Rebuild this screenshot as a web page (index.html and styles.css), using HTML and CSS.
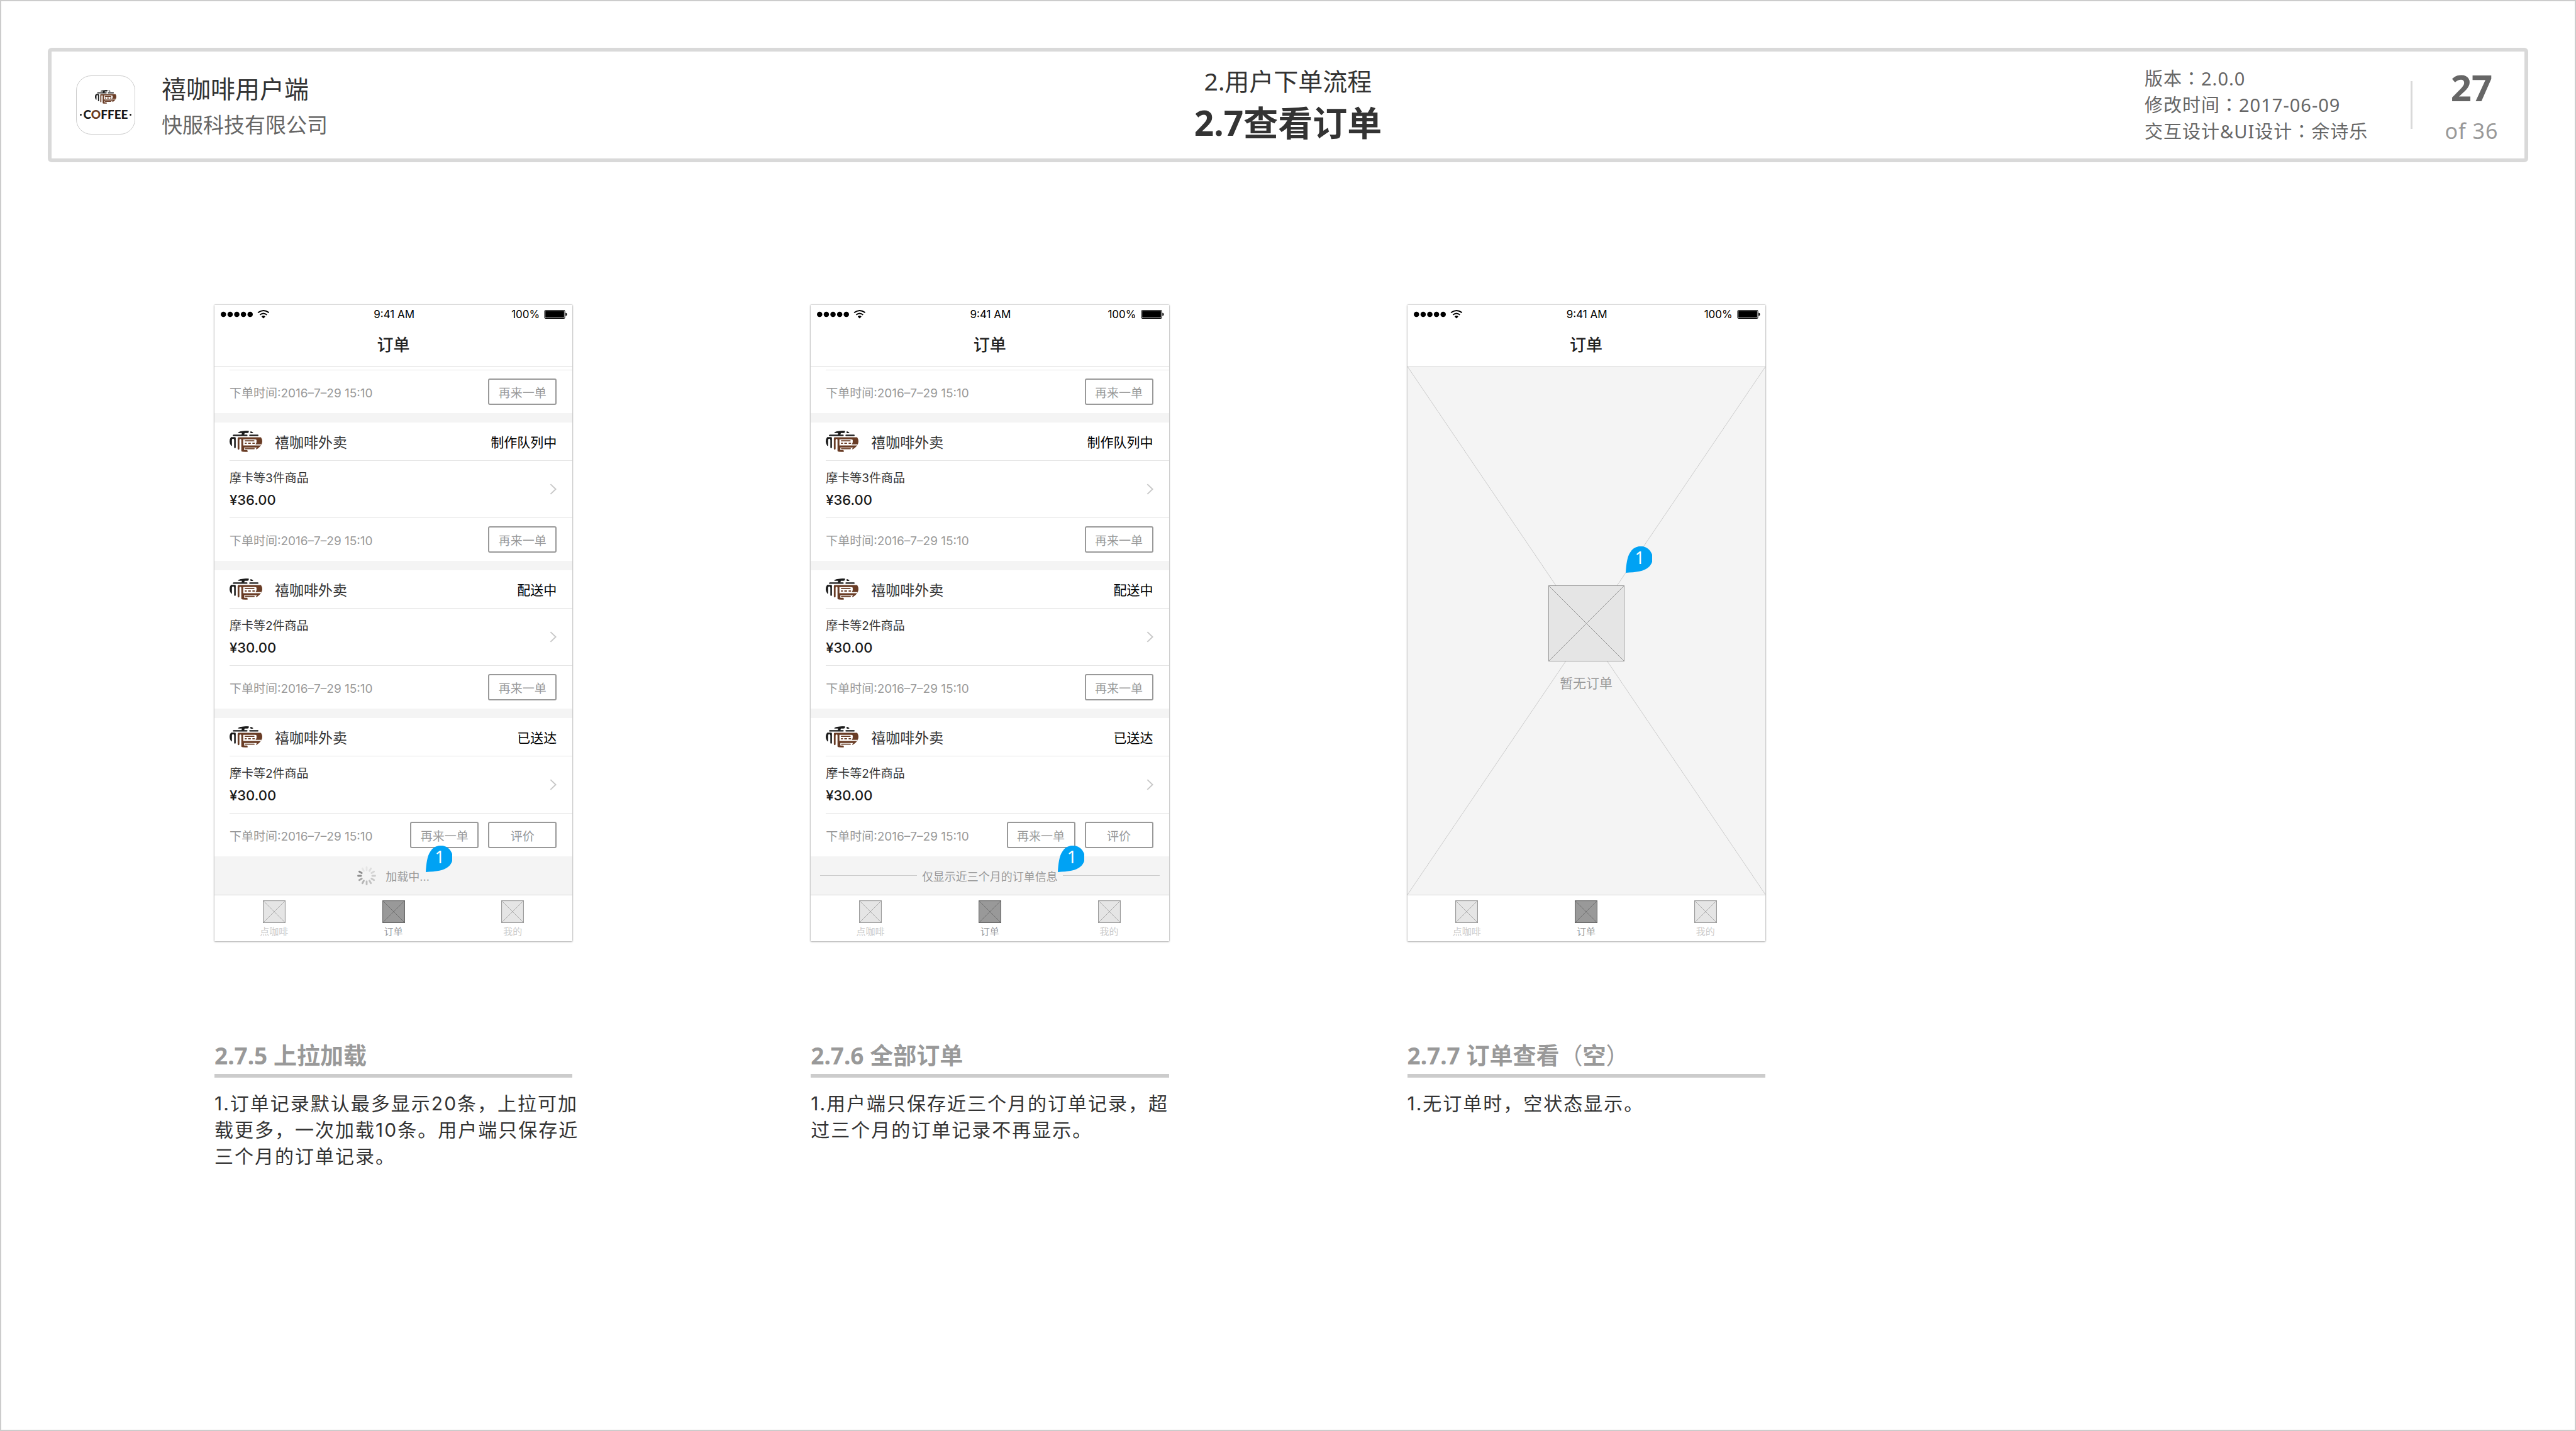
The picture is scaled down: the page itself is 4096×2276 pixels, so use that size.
FILE: index.html
```html
<!DOCTYPE html>
<html lang="zh-CN">
<head>
<meta charset="utf-8">
<meta name="viewport" content="width=device-width, initial-scale=1">
<title>2.7查看订单</title>
<link rel="stylesheet" href="styles.css">
</head>
<body>
<svg class="defs" width="0" height="0" aria-hidden="true">
  <defs>
    <clipPath id="mark-clip"><ellipse cx="115" cy="79" rx="103" ry="68"/></clipPath>
    <symbol id="mark" viewBox="12 11 206 137" preserveAspectRatio="none">
      <g clip-path="url(#mark-clip)">
        <g fill="#1a1a1a">
          <path d="M65 24 Q72 11 133 11 V20 Q132 26 124 26 H107 L104 38 H87 L90 26 H70 Q65 26 65 24Z"/>
          <path d="M143 16 H150 L161 23 Q161 27 155 27 H146 Q141 24 143 16Z"/>
          <rect x="32" y="36" width="93" height="9" rx="4"/>
          <rect x="136" y="36" width="58" height="9" rx="4"/>
          <path d="M10 105 V60 L22 52 H45 Q51 52 51 58 V118 Q51 123 46 123 Q41 123 41 118 V70 Q41 62 34 62 Q27 62 27 70 V106 Q25 112 18 110Z"/>
        </g>
        <path fill="#693c25" d="M63 59 Q63 53 69 53 H218 V134 H200 L180 131 Q176 130 181 123 L186 119 H104 V135 H120 Q126 135 126 142 V148 H96 Q86 148 86 138 V70 Q86 64 80 64 Q74 64 74 70 V127 Q74 133 69 133 Q63 133 63 127Z"/>
        <path fill="#fff" d="M98 66 H172 Q182 66 182 72 V84 Q182 90 176 99 H216 V106 H98Z"/>
        <g fill="#693c25">
          <rect x="107" y="72" width="62" height="8" rx="4"/>
          <rect x="107" y="88" width="14" height="8" rx="4"/>
          <rect x="128" y="88" width="19" height="8" rx="4"/>
          <rect x="155" y="88" width="17" height="8" rx="4"/>
          <rect x="108" y="123" width="62" height="7" rx="3"/>
        </g>
      </g>
    </symbol>
    <symbol id="signal" viewBox="0 0 101 20">
      <circle cx="5.6" cy="10" r="5.6"/><circle cx="19.6" cy="10" r="5.6"/><circle cx="33.5" cy="10" r="5.6"/><circle cx="47.4" cy="10" r="5.6"/><circle cx="61.3" cy="10" r="5.6"/>
      <g fill="none" stroke="#000" stroke-width="2.6">
        <path d="M77.500 6.500 Q89 -2.500 100.500 6.500"/>
        <path d="M81.800 11 Q89 5 96.200 11"/>
      </g>
      <path d="M85 14.500 Q89 10.800 93 14.500 L89 18.500Z"/>
    </symbol>
    <symbol id="battery" viewBox="0 0 49 19">
      <rect x=".7" y=".7" width="43.600" height="17.600" rx="2.500" fill="none" stroke="#000" stroke-width="1.400"/>
      <rect x="2.300" y="2.300" width="40.400" height="14.400" rx="1"/>
      <path d="M46 6 Q49 6.500 49 9.500 Q49 12.500 46 13Z"/>
    </symbol>
    <symbol id="chevron" viewBox="0 0 14 24">
      <path d="M1.500 1.500 L12.500 12 L1.500 22.500" fill="none" stroke="#c7c7c7" stroke-width="2.500"/>
    </symbol>
    <symbol id="box" viewBox="0 0 48 48">
      <rect class="box-fill" x=".75" y=".75" width="46.500" height="46.500"/>
      <path class="box-line" d="M1 1 L47 47 M47 1 L1 47"/>
    </symbol>
    <symbol id="pin" viewBox="0 0 55 55">
      <path fill="#00a2f4" d="M0 55 C1 38 3 22 9 13 A25 25 0 1 1 47 44 C38 52 22 54 0 55Z"/>
    </symbol>
    <symbol id="spinner" viewBox="-20 -20 40 40">
      <g stroke-width="3.800" stroke-linecap="round">
        <path stroke="#e6e6e6" d="M0 -12 V-18"/>
        <path stroke="#dedede" d="M0 -12 V-18" transform="rotate(30)"/>
        <path stroke="#d6d6d6" d="M0 -12 V-18" transform="rotate(60)"/>
        <path stroke="#cecece" d="M0 -12 V-18" transform="rotate(90)"/>
        <path stroke="#c8c8c8" d="M0 -12 V-18" transform="rotate(120)"/>
        <path stroke="#c2c2c2" d="M0 -12 V-18" transform="rotate(150)"/>
        <path stroke="#bcbcbc" d="M0 -12 V-18" transform="rotate(180)"/>
        <path stroke="#b4b4b4" d="M0 -12 V-18" transform="rotate(210)"/>
        <path stroke="#a6a6a6" d="M0 -12 V-18" transform="rotate(240)"/>
        <path stroke="#8c8c8c" d="M0 -12 V-18" transform="rotate(270)"/>
        <path stroke="#8c8c8c" d="M0 -12 V-18" transform="rotate(300)"/>
        <path stroke="#e6e6e6" d="M0 -12 V-18" transform="rotate(330)"/>
      </g>
    </symbol>
  </defs>
</svg>

<div class="sheet">
  <header class="banner">
    <div class="brand">
      <div class="app-icon">
        <svg class="app-mark"><use href="#mark"/></svg>
        <div class="app-word"><span class="dot"></span><span>C<span class="o">O</span>FFEE</span><span class="dot"></span></div>
      </div>
      <div class="brand-text">
        <p class="product">禧咖啡用户端</p>
        <p class="company">快服科技有限公司</p>
      </div>
    </div>
    <div class="titles">
      <p class="chapter">2.用户下单流程</p>
      <h1 class="title">2.7查看订单</h1>
    </div>
    <div class="info">
      <div class="meta">
        <p>版本<span class="centered-mark" lang="zh-TW">：</span>2.0.0</p>
        <p>修改时间<span class="centered-mark" lang="zh-TW">：</span>2017-06-09</p>
        <p>交互设计&amp;UI设计<span class="centered-mark" lang="zh-TW">：</span>余诗乐</p>
      </div>
      <div class="rule"></div>
      <div class="pager">
        <p class="current">27</p>
        <p class="total">of 36</p>
      </div>
    </div>
  </header>

  <main class="board">
    <section class="column">
      <div class="phone">
        <div class="status-bar">
          <svg class="signal"><use href="#signal"/></svg>
          <span class="clock">9:41 AM</span>
          <span class="power">100% <svg class="battery"><use href="#battery"/></svg></span>
        </div>
        <div class="nav-bar">订单</div>
        <div class="orders">
          <article class="order cut">
            <div class="order-foot"><span class="time">下单时间:2016–7–29 15:10</span><button class="action" type="button">再来一单</button></div>
          </article>
          <article class="order">
            <div class="order-head"><svg class="shop-mark"><use href="#mark"/></svg><span class="shop">禧咖啡外卖</span><span class="state">制作队列中</span></div>
            <div class="order-body"><div><p class="goods">摩卡等3件商品</p><p class="price">¥36.00</p></div><svg class="chevron"><use href="#chevron"/></svg></div>
            <div class="order-foot"><span class="time">下单时间:2016–7–29 15:10</span><button class="action" type="button">再来一单</button></div>
          </article>
          <article class="order">
            <div class="order-head"><svg class="shop-mark"><use href="#mark"/></svg><span class="shop">禧咖啡外卖</span><span class="state">配送中</span></div>
            <div class="order-body"><div><p class="goods">摩卡等2件商品</p><p class="price">¥30.00</p></div><svg class="chevron"><use href="#chevron"/></svg></div>
            <div class="order-foot"><span class="time">下单时间:2016–7–29 15:10</span><button class="action" type="button">再来一单</button></div>
          </article>
          <article class="order">
            <div class="order-head"><svg class="shop-mark"><use href="#mark"/></svg><span class="shop">禧咖啡外卖</span><span class="state">已送达</span></div>
            <div class="order-body"><div><p class="goods">摩卡等2件商品</p><p class="price">¥30.00</p></div><svg class="chevron"><use href="#chevron"/></svg></div>
            <div class="order-foot"><span class="time">下单时间:2016–7–29 15:10</span><button class="action" type="button">再来一单</button><button class="action" type="button">评价</button></div>
          </article>
        </div>
        <div class="list-end loading"><svg class="spinner"><use href="#spinner"/></svg><span>加载中...</span></div>
        <nav class="tab-bar">
          <a class="tab" href="#"><svg class="tab-icon"><use href="#box"/></svg>点咖啡</a>
          <a class="tab active" href="#"><svg class="tab-icon"><use href="#box"/></svg>订单</a>
          <a class="tab" href="#"><svg class="tab-icon"><use href="#box"/></svg>我的</a>
        </nav>
        <div class="pin pin-loading"><svg class="pin-shape"><use href="#pin"/></svg><span class="pin-number">1</span></div>
      </div>
      <h2 class="caption">2.7.5 上拉加载</h2>
      <p class="note">1.订单记录默认最多显示20条，上拉可加载更多，一次加载10条。用户端只保存近三个月的订单记录。</p>
    </section>

    <section class="column">
      <div class="phone">
        <div class="status-bar">
          <svg class="signal"><use href="#signal"/></svg>
          <span class="clock">9:41 AM</span>
          <span class="power">100% <svg class="battery"><use href="#battery"/></svg></span>
        </div>
        <div class="nav-bar">订单</div>
        <div class="orders">
          <article class="order cut">
            <div class="order-foot"><span class="time">下单时间:2016–7–29 15:10</span><button class="action" type="button">再来一单</button></div>
          </article>
          <article class="order">
            <div class="order-head"><svg class="shop-mark"><use href="#mark"/></svg><span class="shop">禧咖啡外卖</span><span class="state">制作队列中</span></div>
            <div class="order-body"><div><p class="goods">摩卡等3件商品</p><p class="price">¥36.00</p></div><svg class="chevron"><use href="#chevron"/></svg></div>
            <div class="order-foot"><span class="time">下单时间:2016–7–29 15:10</span><button class="action" type="button">再来一单</button></div>
          </article>
          <article class="order">
            <div class="order-head"><svg class="shop-mark"><use href="#mark"/></svg><span class="shop">禧咖啡外卖</span><span class="state">配送中</span></div>
            <div class="order-body"><div><p class="goods">摩卡等2件商品</p><p class="price">¥30.00</p></div><svg class="chevron"><use href="#chevron"/></svg></div>
            <div class="order-foot"><span class="time">下单时间:2016–7–29 15:10</span><button class="action" type="button">再来一单</button></div>
          </article>
          <article class="order">
            <div class="order-head"><svg class="shop-mark"><use href="#mark"/></svg><span class="shop">禧咖啡外卖</span><span class="state">已送达</span></div>
            <div class="order-body"><div><p class="goods">摩卡等2件商品</p><p class="price">¥30.00</p></div><svg class="chevron"><use href="#chevron"/></svg></div>
            <div class="order-foot"><span class="time">下单时间:2016–7–29 15:10</span><button class="action" type="button">再来一单</button><button class="action" type="button">评价</button></div>
          </article>
        </div>
        <div class="list-end complete"><span>仅显示近三个月的订单信息</span></div>
        <nav class="tab-bar">
          <a class="tab" href="#"><svg class="tab-icon"><use href="#box"/></svg>点咖啡</a>
          <a class="tab active" href="#"><svg class="tab-icon"><use href="#box"/></svg>订单</a>
          <a class="tab" href="#"><svg class="tab-icon"><use href="#box"/></svg>我的</a>
        </nav>
        <div class="pin pin-complete"><svg class="pin-shape"><use href="#pin"/></svg><span class="pin-number">1</span></div>
      </div>
      <h2 class="caption">2.7.6 全部订单</h2>
      <p class="note">1.用户端只保存近三个月的订单记录，超过三个月的订单记录不再显示。</p>
    </section>

    <section class="column">
      <div class="phone">
        <div class="status-bar">
          <svg class="signal"><use href="#signal"/></svg>
          <span class="clock">9:41 AM</span>
          <span class="power">100% <svg class="battery"><use href="#battery"/></svg></span>
        </div>
        <div class="nav-bar">订单</div>
        <div class="empty">
          <svg class="empty-lines" viewBox="0 0 100 100" preserveAspectRatio="none"><path d="M0 0 L100 100 M100 0 L0 100"/></svg>
          <svg class="empty-icon" viewBox="0 0 121 121"><rect x=".5" y=".5" width="120" height="120"/><path d="M1 1 L120 120 M120 1 L1 120"/></svg>
          <p class="empty-text">暂无订单</p>
        </div>
        <nav class="tab-bar">
          <a class="tab" href="#"><svg class="tab-icon"><use href="#box"/></svg>点咖啡</a>
          <a class="tab active" href="#"><svg class="tab-icon"><use href="#box"/></svg>订单</a>
          <a class="tab" href="#"><svg class="tab-icon"><use href="#box"/></svg>我的</a>
        </nav>
        <div class="pin pin-empty"><svg class="pin-shape"><use href="#pin"/></svg><span class="pin-number">1</span></div>
      </div>
      <h2 class="caption">2.7.7 订单查看<span class="centered-mark" lang="zh-TW">（</span>空<span class="centered-mark" lang="zh-TW">）</span></h2>
      <p class="note">1.无订单时，空状态显示。</p>
    </section>
  </main>
</div>
</body>
</html>
```
FILE: styles.css
```css
* {
  box-sizing: border-box;
}

body,
p,
h1,
h2 {
  margin: 0;
}

body {
  background: #fff;
  color: #333;
  font-family: "Noto Sans", "Noto Sans CJK SC", sans-serif;
}

.defs {
  position: absolute;
}

.sheet {
  min-height: 100vh;
  padding: 74px;
  border: 2px solid #ccc;
}

/* Traditional-script forms keep full-width punctuation centred in its cell */
.centered-mark {
  font-family: "Noto Sans CJK TC", sans-serif;
  font-weight: 400;
  line-height: 1;
}

/* Banner */

.banner {
  display: grid;
  grid-template-columns: 1fr auto 1fr;
  align-items: center;
  height: 182px;
  border: 6px solid #d9d9d9;
  border-radius: 6px;
}

.brand {
  display: flex;
  align-items: center;
  gap: 42px;
  padding-left: 39px;
}

.app-icon {
  display: flex;
  flex-direction: column;
  align-items: center;
  gap: 9px;
  width: 94px;
  height: 94px;
  padding-top: 22px;
  border: 1px solid #ccc;
  border-radius: 24px;
}

.app-mark {
  width: 34px;
  height: 22px;
}

.app-word {
  display: flex;
  align-items: center;
  gap: 3px;
  color: #1a1a1a;
  font: 900 19px/16px Lato, sans-serif;
}

.app-word .o {
  color: #693c25;
}

.app-word .dot {
  width: 3px;
  height: 3px;
  border-radius: 50%;
  background: #1a1a1a;
}

.brand-text {
  padding-top: 6px;
}

.product {
  font-size: 39px;
  line-height: 58px;
}

.company {
  color: #666;
  font-size: 33px;
  line-height: 58px;
}

.titles {
  padding-bottom: 5px;
  text-align: center;
}

.chapter {
  font-size: 39px;
  line-height: 60px;
}

.title {
  font-size: 55px;
  font-weight: 700;
  line-height: 72px;
}

.info {
  display: flex;
  align-items: center;
  justify-content: flex-end;
}

.meta {
  width: 423px;
  color: #666;
  font-size: 29px;
  letter-spacing: 1px;
  line-height: 42px;
}

.rule {
  width: 3px;
  height: 76px;
  background: #d9d9d9;
}

.pager {
  width: 168px;
  margin-left: 10px;
  padding-top: 9px;
  text-align: center;
}

.current {
  color: #666;
  font-size: 58px;
  font-weight: 700;
  line-height: 72px;
}

.total {
  color: #999;
  font-size: 34px;
  letter-spacing: 1px;
  line-height: 66px;
}

/* Board */

.board {
  display: grid;
  grid-template-columns: repeat(4, 1fr);
  gap: 379px;
  padding: 227px 265px 0;
}

.phone {
  position: relative;
  background: #fff;
  color: #333;
  font-family: Inter, "Noto Sans CJK SC", sans-serif;
  box-shadow: 0 0 2px rgba(0, 0, 0, 0.4), 0 1px 3px rgba(0, 0, 0, 0.2);
}

.status-bar {
  display: grid;
  grid-template-columns: 1fr auto 1fr;
  align-items: center;
  height: 30px;
  padding: 0 8px 0 10px;
  color: #000;
  font-size: 17px;
  line-height: 30px;
}

.signal {
  width: 77px;
  height: 16px;
}

.power {
  display: flex;
  align-items: center;
  justify-content: flex-end;
  gap: 7px;
}

.battery {
  width: 37px;
  height: 14px;
}

.nav-bar {
  height: 68px;
  border-bottom: 1px solid #e0e0e0;
  color: #222;
  font-size: 26px;
  font-weight: 500;
  line-height: 67px;
  text-align: center;
}

.orders {
  display: grid;
  gap: 15px;
  background: #f4f4f4;
}

.order {
  padding-left: 24px;
  background: #fff;
}

.cut {
  padding-top: 5px;
}

.order-head {
  display: flex;
  align-items: center;
  height: 60px;
  padding-right: 25px;
}

.shop-mark {
  width: 52px;
  height: 34px;
  margin-right: 20px;
}

.shop {
  flex: 1;
  font-size: 23px;
}

.state {
  color: #000;
  font-size: 21px;
}

.order-body {
  display: flex;
  align-items: center;
  justify-content: space-between;
  height: 91px;
  padding-right: 25px;
  border-top: 1px solid #e5e5e5;
}

.goods {
  font-size: 19px;
  line-height: 34px;
}

.price {
  color: #1a1a1a;
  font-size: 22px;
  font-weight: 500;
  line-height: 34px;
}

.chevron {
  width: 11px;
  height: 18px;
}

.order-foot {
  display: flex;
  align-items: center;
  gap: 15px;
  height: 69px;
  padding-right: 25px;
  border-top: 1px solid #e5e5e5;
}

.time {
  flex: 1;
  color: #999;
  font-size: 19px;
}

.action {
  width: 109px;
  height: 42px;
  padding: 0;
  border: 2px solid #999;
  border-radius: 3px;
  background: #fff;
  color: #999;
  font-family: inherit;
  font-size: 19px;
}

.list-end {
  display: flex;
  align-items: center;
  justify-content: center;
  height: 61px;
  padding: 0 15px;
  background: #f4f4f4;
  color: #999;
  font-size: 18px;
}

.loading {
  gap: 15px;
}

.spinner {
  width: 30px;
  height: 30px;
}

.complete {
  gap: 8px;
}

.complete::before,
.complete::after {
  content: "";
  flex: 1;
  height: 1px;
  background: #ccc;
}

.tab-bar {
  display: flex;
  height: 74px;
  border-top: 1px solid #d5d5d5;
}

.tab {
  display: flex;
  flex: 1;
  flex-direction: column;
  align-items: center;
  gap: 3px;
  padding-top: 8px;
  color: #ccc;
  font-size: 15px;
  line-height: 22px;
  text-decoration: none;
  --fill: #e5e5e5;
  --line: #999;
}

.tab.active {
  color: #999;
  --fill: #999;
  --line: #666;
}

.tab-icon {
  width: 36px;
  height: 36px;
}

.box-fill {
  fill: var(--fill);
  stroke: var(--line);
  stroke-width: 1.5;
}

.box-line {
  fill: none;
  stroke: var(--line);
}

.empty {
  position: relative;
  display: flex;
  flex-direction: column;
  align-items: center;
  gap: 20px;
  height: 840px;
  padding-top: 348px;
  background: #f4f4f4;
}

.empty-lines {
  position: absolute;
  inset: 0;
  width: 100%;
  height: 100%;
}

.empty-lines path {
  fill: none;
  stroke: #ccc;
  stroke-width: 1px;
  vector-effect: non-scaling-stroke;
}

.empty-icon {
  position: relative;
  flex: none;
  width: 121px;
  height: 121px;
  fill: #e5e5e5;
  stroke: #999;
}

.empty-text {
  position: relative;
  color: #999;
  font-size: 21px;
  line-height: 30px;
}

.pin {
  position: absolute;
  width: 42px;
  height: 42px;
}

.pin-shape {
  display: block;
  width: 42px;
  height: 42px;
}

.pin-number {
  position: absolute;
  inset: 0 0 4px 3px;
  color: #fff;
  font: 27px/36px "Noto Sans", sans-serif;
  text-align: center;
}

.pin-loading {
  top: 860px;
  left: 59%;
}

.pin-complete {
  top: 860px;
  left: 69%;
}

.pin-empty {
  top: 384px;
  left: 61%;
}

.caption {
  margin-top: 157px;
  padding-bottom: 4px;
  border-bottom: 6px solid #ccc;
  color: #999;
  font-size: 37px;
  font-weight: 700;
  line-height: 50px;
}

.note {
  margin: 20px -16px 0 0;
  font-family: Inter, "Noto Sans CJK SC", sans-serif;
  font-size: 30px;
  letter-spacing: 2px;
  line-height: 42px;
}
```
